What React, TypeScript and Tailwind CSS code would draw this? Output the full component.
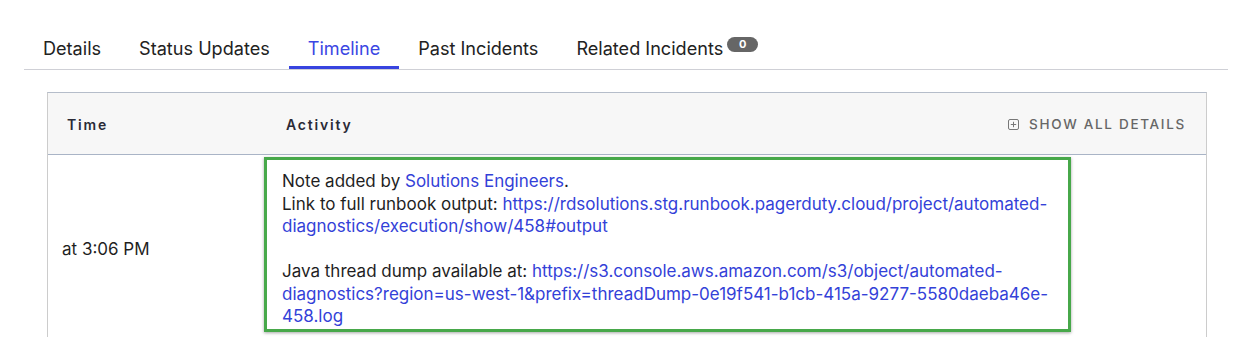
const tabs = ["Details", "Status Updates", "Timeline", "Past Incidents", "Related Incidents"];

const linkCls = "text-[#3341d8] hover:underline";

const App = () => {
  return (
    <div className="w-[1252px] h-[337px] overflow-hidden bg-white px-[24px] pt-[36px] font-['Inter',sans-serif] text-[#1f1f1f]">
      <div className="flex border-b border-[#cfd0d6]">
        {tabs.map((t) => {
          const active = t === "Timeline";
          return (
            <button
              key={t}
              className={
                active
                  ? "flex items-center px-[19px] pb-[6px] border-b-[3px] border-[#3844e0] text-[18.1px] leading-[24px] text-[#3b46e3]"
                  : "flex items-center px-[19px] pb-[6px] border-b-[3px] border-transparent text-[18.1px] leading-[24px] text-[#222]"
              }
            >
              {t}
              {t === "Related Incidents" && (
                <span className="relative -top-[4px] ml-[4px] flex h-[15px] w-[31px] items-center justify-center rounded-full bg-[#666] text-[11px] font-bold leading-none text-white">
                  0
                </span>
              )}
            </button>
          );
        })}
      </div>

      <div className="ml-[23px] mr-[21px] mt-[22px] border-x border-t border-x-[#cccccc] border-t-[#b5bdca]">
        <div className="flex h-[62px] items-center border-b border-[#a9b4c6] bg-[#f7f7f7] pt-[2px] text-[14px] font-semibold tracking-[1.8px] text-[#2a2a36]">
          <div className="w-[216px] pl-[19px]">Time</div>
          <div className="flex flex-1 items-center justify-between pl-[22px] pr-[20px]">
            <span>Activity</span>
            <button className="flex items-center gap-[10px] text-[13.5px] font-medium tracking-[1.7px] text-[#666]">
              <svg width="11" height="11" viewBox="0 0 11 11" fill="none" stroke="#777" strokeWidth="1">
                <rect x="0.5" y="0.5" width="10" height="10" rx="1.5" />
                <path d="M5.5 2.8v5.4M2.8 5.5h5.4" />
              </svg>
              SHOW ALL DETAILS
            </button>
          </div>
        </div>

        <div className="flex items-center pt-[2px]">
          <div className="w-[216px] pl-[14px] text-[17px]">at 3:06 PM</div>
          <div className="mb-[10px] w-[807px] border-[3px] border-[#47a84a] pl-[15px] pr-[4px] pt-[10px] pb-[1px] text-[17px] leading-[22.5px] whitespace-nowrap shadow-[0_1px_3px_rgba(0,0,0,0.35)]">
            <div>
              Note added by <a className={linkCls}>Solutions Engineers</a>.
            </div>
            <div>
              Link to full runbook output:{" "}
              <a className={linkCls}>
                https://rdsolutions.stg.runbook.pagerduty.cloud/project/automated-
                <br />
                diagnostics/execution/show/458#output
              </a>
            </div>
            <div className="h-[22.5px]" />
            <div>
              Java thread dump available at:{" "}
              <a className={linkCls}>
                https://s3.console.aws.amazon.com/s3/object/automated-
                <br />
                diagnostics?region=us-west-1&amp;prefix=threadDump-0e19f541-b1cb-415a-9277-5580daeba46e-
                <br />
                458.log
              </a>
            </div>
          </div>
        </div>
      </div>
    </div>
  );
};

export default App;
